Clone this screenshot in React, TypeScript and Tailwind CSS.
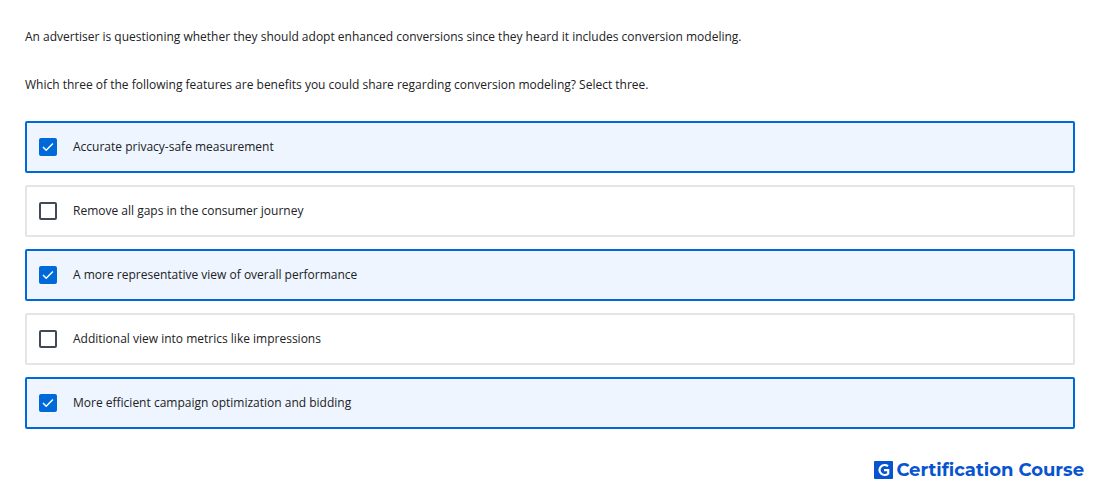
import React, { useState } from 'react';

interface Option {
  id: string;
  label: string;
  correct: boolean;
}

const options: Option[] = [
  { id: 'privacy', label: 'Accurate privacy-safe measurement', correct: true },
  { id: 'gaps', label: 'Remove all gaps in the consumer journey', correct: false },
  { id: 'performance', label: 'A more representative view of overall performance', correct: true },
  { id: 'impressions', label: 'Additional view into metrics like impressions', correct: false },
  { id: 'bidding', label: 'More efficient campaign optimization and bidding', correct: true },
];

interface OptionRowProps {
  option: Option;
  checked: boolean;
  onToggle: (id: string) => void;
}

function OptionRow({ option, checked, onToggle }: OptionRowProps) {
  return (
    <label
      htmlFor={option.id}
      className={`flex h-13 cursor-pointer items-center gap-4 rounded-xs border-2 px-3 ${
        checked ? 'border-[#0069da] bg-[#eef5ff]' : 'border-[#e4e5e5] bg-white'
      }`}
    >
      <span className="grid size-[18px] shrink-0">
        <input
          id={option.id}
          type="checkbox"
          checked={checked}
          onChange={() => onToggle(option.id)}
          className="col-start-1 row-start-1 size-[18px] appearance-none rounded-xs border-2 border-[#414858] bg-white checked:border-[#0069da] checked:bg-[#0069da]"
        />
        {checked && (
          <svg viewBox="0 0 18 18" className="pointer-events-none col-start-1 row-start-1 size-[18px]" aria-hidden="true">
            <path d="M4 9 7.2 12.2 13.9 5.5" fill="none" stroke="#fff" strokeWidth="1.5" />
          </svg>
        )}
      </span>
      <span>{option.label}</span>
    </label>
  );
}

function BrandLogo() {
  return (
    <a href="#" className="flex items-center gap-[3px] font-['Montserrat','Open_Sans',sans-serif] text-lg font-bold text-[#0853cf]">
      <svg viewBox="0 0 19 18" className="h-[18px] w-[19px]" aria-hidden="true">
        <rect width="19" height="18" rx="1" fill="#0853cf" />
        <path d="M14 5.2A5.2 4.9 0 1 0 14.2 12.6V9.2H10" fill="none" stroke="#fff" strokeWidth="2.2" />
      </svg>
      <span>Certification Course</span>
    </a>
  );
}

export default function App() {
  const [selected, setSelected] = useState<string[]>(options.filter((o) => o.correct).map((o) => o.id));

  const toggle = (id: string) => {
    setSelected((prev) => (prev.includes(id) ? prev.filter((x) => x !== id) : [...prev, id]));
  };

  return (
    <main className="bg-white font-['Open_Sans',sans-serif] text-xs leading-6 text-[#202124]">
      <fieldset className="px-[25px] pt-[25px]">
        <p className="mb-6">
          An advertiser is questioning whether they should adopt enhanced conversions since they heard it includes conversion modeling.
        </p>
        <p className="mb-6">
          Which three of the following features are benefits you could share regarding conversion modeling? Select three.
        </p>
        <div className="flex flex-col gap-3">
          {options.map((option) => (
            <OptionRow key={option.id} option={option} checked={selected.includes(option.id)} onToggle={toggle} />
          ))}
        </div>
      </fieldset>
      <footer className="flex justify-end px-4 pt-[27px]">
        <BrandLogo />
      </footer>
    </main>
  );
}
